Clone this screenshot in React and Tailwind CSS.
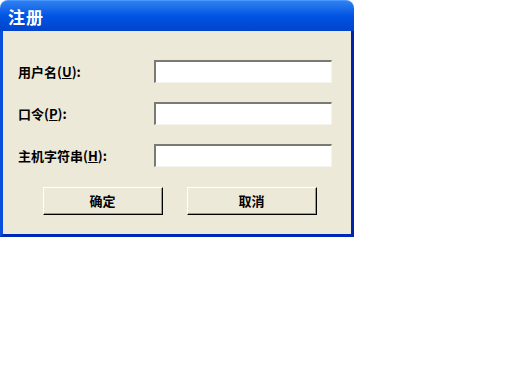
import React from 'react';

const font = { fontFamily: '"Noto Sans CJK SC", "Liberation Sans", sans-serif' };

function Field({ label, hot, rest }) {
  return (
    <div className="flex items-center h-[23px]">
      <div className="w-[151px] pl-[15px] text-[13px] font-bold text-black leading-none">
        {label}(<span className="underline">{hot}</span>){rest}
      </div>
      <div className="w-[178px] h-[23px] bg-white border-t-2 border-l-2 border-t-[#7a7a70] border-l-[#7a7a70] border-b border-r border-b-[#f4f3ee] border-r-[#f4f3ee]" />
    </div>
  );
}

function Button({ children, w }) {
  return (
    <div className={`${w} h-[28px] border border-t-white border-l-white border-b-black border-r-black`}>
      <div className="h-full flex items-center justify-center bg-[#ece9d8] border-b border-r border-b-[#9d9a8c] border-r-[#9d9a8c] text-[13px] font-bold text-black">
        {children}
      </div>
    </div>
  );
}

export default function App() {
  return (
    <div className="w-[512px] h-[384px] bg-white" style={font}>
      <div className="w-[354px] h-[237px] flex flex-col">
        <div className="h-[31px] rounded-t-[8px] bg-gradient-to-b from-[#2f80f0] via-[#0054e3] to-[#0044cc] flex items-center pl-[8px] border-t border-t-[#4a98ff]">
          <span className="text-white text-[17px] font-bold leading-none tracking-[1px]">注册</span>
        </div>
        <div className="flex-1 flex border-l-[3px] border-l-[#0a4fdc] border-r-[3px] border-r-[#0021a8] border-b-[3px] border-b-[#0026b8]">
          <div className="flex-1 bg-[#ece9d8] flex flex-col pt-[29px] gap-[19px]">
            <Field label="用户名" hot="U" rest=":" />
            <Field label="口令" hot="P" rest=":" />
            <Field label="主机字符串" hot="H" rest=":" />
            <div className="flex pl-[40px] gap-[24px] pt-[1px]">
              <Button w="w-[120px]">确定</Button>
              <Button w="w-[130px]">取消</Button>
            </div>
          </div>
        </div>
      </div>
    </div>
  );
}
